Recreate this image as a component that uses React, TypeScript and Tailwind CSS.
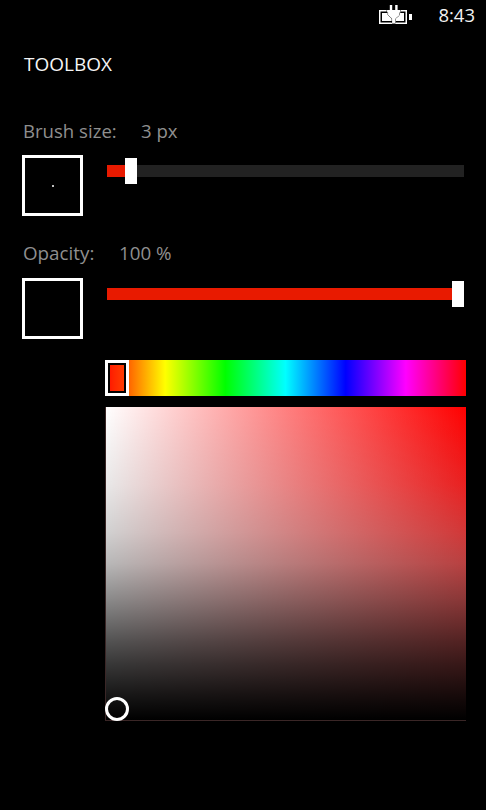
function Slider({ value }: { value: number }) {
  return (
    <div className="relative ml-6 mt-[3px] h-[26px] w-[357px]">
      <div className="absolute left-0 right-0 top-[7px] h-[12px] bg-[#222222]" />
      <div className="absolute left-0 top-[7px] h-[12px] bg-[#e81a00]" style={{ width: value + 4 }} />
      <div className="absolute top-0 h-[26px] w-[12px] bg-white" style={{ left: value }} />
    </div>
  );
}

function Battery() {
  return (
    <svg width="34" height="20" viewBox="0 0 34 20" className="mb-[2px] block">
      <rect x="0.75" y="5.75" width="26.5" height="12.500" fill="none" stroke="#fff" strokeWidth="1.500" />
      <rect x="3" y="8" width="22" height="8" fill="#fff" />
      <rect x="30" y="9" width="3" height="6" fill="#fff" />
      <path
        d="M10.800 0h2.400v5h3v-5h2.400v5h2.900v2.500h-1v2.500l-4 3.500v4.500h-3.400v-4.500l-4-3.500v-2.500h-1v-2.500h2.700z"
        fill="#fff"
        stroke="#000"
        strokeWidth="0.900"
        paintOrder="stroke"
      />
    </svg>
  );
}

export default function App() {
  return (
    <div className="flex h-[810px] w-[486px] flex-col overflow-hidden bg-black font-['Open_Sans','Noto_Sans',sans-serif] text-white">
      <div className="flex h-[32px] items-center justify-end">
        <Battery />
        <span className="mb-[2px] ml-[25px] mr-[11px] text-[18.5px] leading-none text-[#f2f2f2]">8:43</span>
      </div>
      <div className="mt-[20px] pl-[24px] text-[19px] leading-[25px] text-[#f5f5f5]">TOOLBOX</div>

      <div className="mt-[41px] flex pl-[23px] text-[18.6px] leading-[26px] text-[#8f8f8f]">
        <span className="w-[118px]">Brush size:</span>
        <span>3 px</span>
      </div>
      <div className="mt-[11px] flex items-start pl-[22px]">
        <div className="flex h-[61px] w-[61px] items-center justify-center border-[3px] border-white">
          <div className="h-[2px] w-[2px] rounded-full bg-white" />
        </div>
        <Slider value={18} />
      </div>

      <div className="mt-[24px] flex pl-[23px] text-[18.8px] leading-[26px] text-[#8f8f8f]">
        <span className="w-[96px]">Opacity:</span>
        <span>100 %</span>
      </div>
      <div className="mt-[12px] flex items-start pl-[22px]">
        <div className="h-[61px] w-[61px] border-[3px] border-white" />
        <Slider value={345} />
      </div>

      <div className="ml-[105px] mt-[21px] w-[361px]">
        <div className="relative h-[36px] w-full bg-[linear-gradient(to_right,#ff0000_0%,#ffff00_16.67%,#00ff00_33.33%,#00ffff_50%,#0000ff_66.67%,#ff00ff_83.33%,#ff0000_100%)]">
          <div className="absolute left-0 top-0 h-[36px] w-[24px] border-[3px] border-white bg-black p-[2px]">
            <div className="h-full w-full bg-gradient-to-r from-[#ff1a00] to-[#ff3b00]" />
          </div>
        </div>
        <div className="relative mt-[11px] h-[314px] w-full border-b border-l border-[#3a2626] bg-[linear-gradient(to_bottom,rgba(0,0,0,0)_0%,rgba(0,0,0,0.09)_25%,rgba(0,0,0,0.18)_40%,rgba(0,0,0,0.28)_50%,rgba(0,0,0,0.46)_61.5%,rgba(0,0,0,0.68)_75%,rgba(0,0,0,0.78)_82%,rgba(0,0,0,0.91)_92%,rgba(0,0,0,1)_100%),linear-gradient(to_right,#ffffff,rgba(255,255,255,0)),linear-gradient(to_bottom,#ff0000_0%,#ff2424_25%,#ff5959_50%,#ff6464_62%,#ff6868_75%,#ff7070_100%)]">
          <div className="absolute bottom-[-1px] left-[-1px] h-[24px] w-[24px] rounded-full border-[3px] border-white" />
        </div>
      </div>
    </div>
  );
}
